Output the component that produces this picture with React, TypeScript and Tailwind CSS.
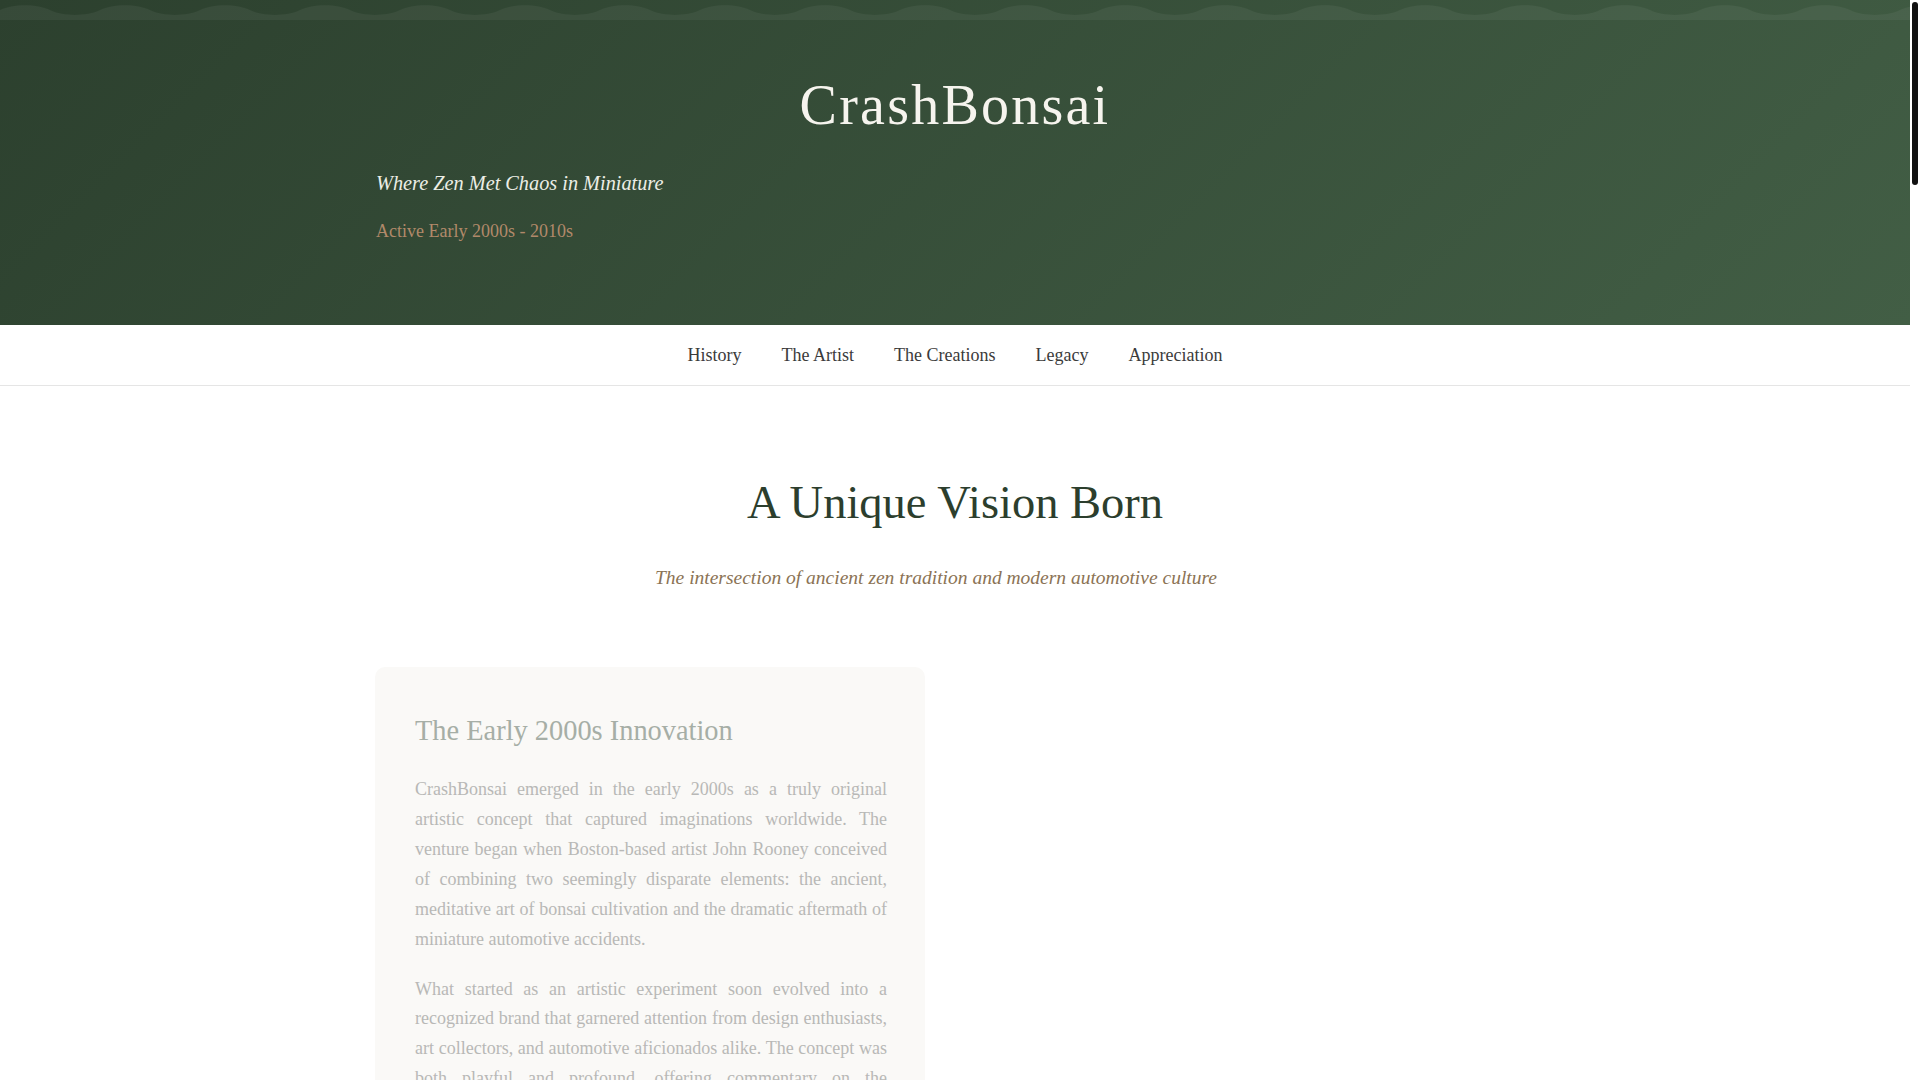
import React from 'react';

const navItems = ['History', 'The Artist', 'The Creations', 'Legacy', 'Appreciation'];

const sections = [
  {
    title: 'The Artist Behind the Trees',
    subtitle: 'John Rooney and the Boston studio where it all began',
    cards: [
      {
        heading: 'A Designer’s Eye',
        body: [
          'Trained as a designer, Rooney approached each piece with the patience of a bonsai master and the humor of a prankster. Every tree was carefully pruned and wired, every tiny car placed with deliberate intent.',
          'The result was a body of work that felt at once serene and unsettling, inviting viewers to linger over each miniature scene and discover the story hidden within it.',
        ],
      },
      {
        heading: 'The Studio Practice',
        body: [
          'Working from a modest studio, Rooney combined horticultural knowledge with model-making skill. Juniper, ficus and elm were paired with die-cast vehicles, broken glass and carefully weathered details.',
        ],
      },
    ],
  },
  {
    title: 'The Creations',
    subtitle: 'Living sculptures where calm and catastrophe share the same pot',
    cards: [
      {
        heading: 'Miniature Collisions',
        body: [
          'Each CrashBonsai piece presented a small automotive mishap at the base of a living tree: a car wrapped around a trunk, a truck overturned among the roots, a sedan perched in the branches.',
          'The contrast between the slow growth of the tree and the sudden violence of the crash gave every scene its peculiar charm.',
        ],
      },
      {
        heading: 'Kits and Collections',
        body: [
          'Beyond finished trees, the brand offered accessory kits so that enthusiasts could stage their own accidents, turning any bonsai into a conversation piece.',
        ],
      },
    ],
  },
  {
    title: 'Legacy',
    subtitle: 'An idea that continues to surprise and delight',
    cards: [
      {
        heading: 'Cultural Impact',
        body: [
          'CrashBonsai became a fixture of design blogs, gift guides and gallery shelves. It showed that a centuries-old tradition could absorb contemporary humor without losing its quiet dignity.',
        ],
      },
      {
        heading: 'Lasting Influence',
        body: [
          'Many artists working with miniatures today cite the project as an example of how play and reflection can live side by side.',
        ],
      },
    ],
  },
  {
    title: 'Appreciation',
    subtitle: 'Why these small scenes still resonate',
    cards: [
      {
        heading: 'Zen in the Chaos',
        body: [
          'To look at a CrashBonsai is to be reminded that accidents happen, that nature endures, and that there is beauty even in the aftermath of disorder.',
        ],
      },
      {
        heading: 'A Gentle Joke',
        body: [
          'At its heart the project was a gentle joke, told with care and craftsmanship, and it remains as charming today as when it first appeared.',
        ],
      },
    ],
  },
];

function Wave() {
  return (
    <svg className="block h-5 w-full" preserveAspectRatio="none">
      <defs>
        <pattern id="wave" width="100" height="20" patternUnits="userSpaceOnUse">
          <path
            d="M0 10 C13 3.5 37 3.5 50 10 C63 16.5 87 16.5 100 10 L100 20 L0 20 Z"
            fill="#ffffff"
            fillOpacity="0.05"
          />
        </pattern>
      </defs>
      <rect width="100%" height="20" fill="url(#wave)" />
    </svg>
  );
}

function Card({ heading, body }: { heading: string; body: string[] }) {
  return (
    <div className="rounded-[10px] bg-[#faf9f7] py-10 pl-10 pr-[38px]">
      <h3 className="mb-5 text-[28.4px] leading-[1.7] text-[#a6aea6]">{heading}</h3>
      {body.map((p, i) => (
        <p key={i} className="mb-5 text-justify text-[18px] leading-[1.66] text-[#b8b8b6] last:mb-0">
          {p}
        </p>
      ))}
    </div>
  );
}

export default function App() {
  return (
    <div className="min-h-screen w-[1910px] bg-white font-['Liberation_Serif','Times_New_Roman',serif]">
      {/* scrollbar thumb as it shows in the capture */}
      <div aria-hidden className="fixed right-[2px] top-[2px] h-[183px] w-[6px] rounded-full bg-[#111111]" />

      {/* Header */}
      <header className="h-[325px] bg-[linear-gradient(135deg,#2c402e_0%,#425e45_100%)]">
        <Wave />
        <div className="mx-auto max-w-[1158px] pt-[52px]">
          <h1 className="text-center text-[3.5rem] leading-[1.2] tracking-[0.04em] text-[#f6f4ee]">
            CrashBonsai
          </h1>
          <p className="mt-[29px] text-[20.3px] italic leading-[1.5] text-[#eceee6]">
            Where Zen Met Chaos in Miniature
          </p>
          <p className="mt-[19px] text-[18px] leading-[1.5] text-[#b1896a]">Active Early 2000s - 2010s</p>
        </div>
      </header>

      {/* Nav */}
      <nav className="flex h-[61px] items-center justify-center gap-10 border-b border-[#e5e5e5] bg-white">
        {navItems.map((item) => (
          <a key={item} href="#" className="text-[18px] text-[#3b3b3b]">
            {item}
          </a>
        ))}
      </nav>

      {/* History */}
      <section className="mx-auto max-w-[1160px] pt-[89px]">
        <h2 className="text-center text-[46.5px] leading-[1.2] text-[#2c3e2d]">A Unique Vision Born</h2>
        <p className="mx-auto mt-8 max-w-[600px] text-[19.5px] italic leading-[1.5] text-[#8b7355]">
          The intersection of ancient zen tradition and modern automotive culture
        </p>
        <div className="mt-[75px] grid grid-cols-2 gap-[60px]">
          <Card
            heading="The Early 2000s Innovation"
            body={[
              'CrashBonsai emerged in the early 2000s as a truly original artistic concept that captured imaginations worldwide. The venture began when Boston-based artist John Rooney conceived of combining two seemingly disparate elements: the ancient, meditative art of bonsai cultivation and the dramatic aftermath of miniature automotive accidents.',
              'What started as an artistic experiment soon evolved into a recognized brand that garnered attention from design enthusiasts, art collectors, and automotive aficionados alike. The concept was both playful and profound, offering commentary on the relationship between nature and industry, permanence and impermanence, calm and catastrophe.',
              'Each tree told a story, and each story invited a second look.',
            ]}
          />
          <div />
        </div>
      </section>

      {sections.map((s) => (
        <section key={s.title} className="mx-auto max-w-[1160px] pt-[120px]">
          <h2 className="text-center text-[46.5px] leading-[1.2] text-[#2c3e2d]">{s.title}</h2>
          <p className="mx-auto mt-8 max-w-[600px] text-center text-[19.5px] italic leading-[1.5] text-[#8b7355]">
            {s.subtitle}
          </p>
          <div className="mt-[75px] grid grid-cols-2 gap-[60px]">
            {s.cards.map((c) => (
              <Card key={c.heading} heading={c.heading} body={c.body} />
            ))}
          </div>
          <div className="h-[400px]" />
        </section>
      ))}

      <footer className="mt-[120px] bg-[#2c402e] py-16 text-center text-[18px] text-[#d8dccf]">
        CrashBonsai — Where Zen Met Chaos in Miniature
      </footer>
    </div>
  );
}
